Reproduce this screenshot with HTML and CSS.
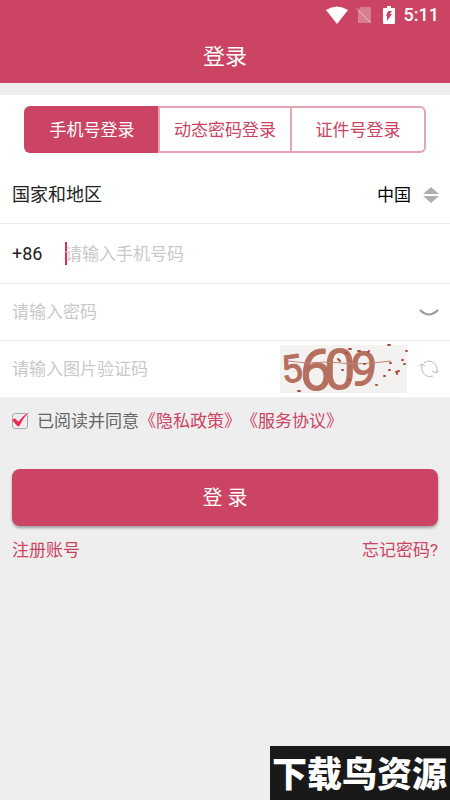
FILE: index.html
```html
<!DOCTYPE html>
<html lang="zh-CN">
<head>
<meta charset="utf-8">
<meta name="viewport" content="width=device-width, initial-scale=1">
<title>登录</title>
<link rel="stylesheet" href="styles.css">
</head>
<body>
<header class="top">
  <div class="status">
    <svg class="wifi" viewBox="0 0 22 18" aria-hidden="true"><path d="M0 4Q11-3 22 4L11 18Z"/></svg>
    <svg class="sim" viewBox="0 0 16 18" aria-hidden="true"><path class="sim-card" d="M5 1H14Q15 1 15 2V16Q15 17 14 17H3Q2 17 2 16V4Z"/><path class="sim-slash" d="M0 2L15 17"/></svg>
    <svg class="battery" viewBox="0 0 12 18" aria-hidden="true"><path d="M4 0H8V2H11Q12 2 12 3V17Q12 18 11 18H1Q0 18 0 17V3Q0 2 1 2H4Z"/><path class="bolt" d="M5 5H9L7 8H9L4 15V10H3Z"/></svg>
    <span>5:11</span>
  </div>
  <h1>登录</h1>
</header>
<main>
  <form>
    <section class="card">
      <div class="tabs">
        <button type="button" class="tab active">手机号登录</button>
        <button type="button" class="tab">动态密码登录</button>
        <button type="button" class="tab">证件号登录</button>
      </div>
      <div class="row region">
        <label for="country">国家和地区</label>
        <select id="country"><option>中国</option></select>
        <svg class="sorter" viewBox="0 0 16 16" aria-hidden="true"><path d="M8 0L16 7H0ZM0 9H16L8 16Z"/></svg>
      </div>
      <div class="row phone">
        <label class="code" for="phone">+86</label>
        <span class="caret"></span>
        <input id="phone" type="tel" placeholder="请输入手机号码">
      </div>
      <div class="row">
        <input type="password" aria-label="密码" placeholder="请输入密码">
        <button type="button" class="icon" aria-label="显示密码"><svg viewBox="0 0 20 20"><path class="eye" d="M1 8Q10 17 19 8"/></svg></button>
      </div>
      <div class="row">
        <input type="text" aria-label="图片验证码" placeholder="请输入图片验证码">
        <svg class="captcha" viewBox="0 0 127 48" role="img" aria-label="验证码">
          <rect width="127" height="48" fill="#f4f1f1"/>
          <g class="digits">
            <text x="1" y="37" font-size="38" transform="rotate(-8 12 24)">5</text>
            <text x="20" y="45" font-size="58" transform="rotate(4 36 24)">6</text>
            <text x="44" y="44" font-size="56">0</text>
            <text x="70" y="41" font-size="48" transform="rotate(6 84 24)">9</text>
          </g>
          <path class="scratch" d="M8 16L26 18L48 17L74 19L92 18L111 16"/>
          <path class="specks" d="M18 46h2M69 4h2M66 8h1M58 14l2 2M62 25h1M69 35h1M78 6h2M88 7l1-1M84 19h1M96 40h1M104 31h1M109 25h1M110 18h1M108 0h2M116 27l3-1M117 28v1M122 15h1M124 19h1M126 6h1"/>
        </svg>
        <button type="button" class="icon" aria-label="刷新验证码"><svg viewBox="0 0 20 20"><path class="refresh" d="M3 5V11A8 8 0 0 0 14 17M5 4A8 8 0 0 1 17 14M0 7L3 5L6 7M13 12L17 14L20 12"/></svg></button>
      </div>
    </section>
    <div class="agree">
      <span class="check">
        <input type="checkbox" id="agree" checked>
        <svg viewBox="0 0 20 18" aria-hidden="true"><path d="M0 9L3 7L7 11Q12 4 19 0Q12 7 8 16H6Z"/></svg>
      </span>
      <label for="agree">已阅读并同意</label><a href="#privacy">《隐私政策》</a><a href="#terms">《服务协议》</a>
    </div>
    <button type="submit" class="submit">登 录</button>
    <nav class="links"><a href="#register">注册账号</a><a href="#forgot">忘记密码?</a></nav>
  </form>
</main>
<footer class="brand">下载鸟资源</footer>
</body>
</html>
```
FILE: styles.css
```css
* { box-sizing: border-box; }
body {
  margin: 0;
  min-height: 100vh;
  display: flex;
  flex-direction: column;
  background: #eee;
  color: #222;
  font-family: Roboto, "Noto Sans CJK SC", sans-serif;
  font-size: 17px;
  line-height: 24px;
}
button, input, select { font: inherit; color: inherit; border: 0; padding: 0; margin: 0; background: none; border-radius: 0; }
a { color: #cb4463; text-decoration: none; }
svg { display: block; flex: none; }
.top { background: #cb4463; color: #fff; height: 83px; }
.status { display: flex; justify-content: flex-end; align-items: center; height: 30px; padding-right: 11px; font-size: 18px; font-weight: 500; }
.wifi { width: 22px; height: 18px; fill: #fff; margin-right: 8px; }
.sim { width: 16px; height: 18px; margin-right: 11px; }
.sim-card { fill: #fff; opacity: .3; }
.sim-slash { stroke: #fff; opacity: .5; fill: none; }
.battery { width: 12px; height: 18px; fill: #fff; margin-right: 9px; }
.bolt { fill: #cb4463; }
h1 { margin: 0; font-size: 22px; font-weight: 400; line-height: 54px; text-align: center; }
main { flex: 1; }
.card { margin-top: 12px; padding-top: 11px; background: #fff; }
.tabs { display: grid; grid-template-columns: repeat(3, 1fr); margin: 0 24px; height: 47px; }
.tab { color: #cb4463; white-space: nowrap; border: 2px solid #e6a3b3; }
.tab:first-child { border-radius: 6px 0 0 6px; }
.tab:last-child { border-radius: 0 6px 6px 0; border-left: 0; }
.tab.active { background: #cb4463; border-color: #cb4463; border-right: 0; color: #fff; }
.row { display: flex; align-items: center; height: 57px; padding: 0 11px 0 12px; border-top: 1px solid #e8e8e8; }
.row input { flex: 1; min-width: 0; height: 40px; outline: 0; }
.row input::placeholder { color: #c9c9c9; opacity: 1; }
.region { height: 70px; border: 0; padding-top: 13px; }
.region label { flex: 1; font-size: 18px; }
.region select { appearance: none; color: #000; outline: 0; }
.sorter { width: 16px; height: 16px; fill: #b0b0b0; margin-left: 12px; }
.phone { height: 60px; }
.code { width: 53px; font-size: 18px; }
.caret { width: 2px; height: 23px; margin-right: -2px; background: #d9304f; }
.icon { width: 20px; height: 20px; flex: none; }
.icon svg { width: 20px; height: 20px; fill: none; }
.eye { stroke: #999; stroke-width: 2; }
.refresh { stroke: #bbb; }
.captcha { width: 127px; height: 48px; margin-right: 12px; overflow: visible; }
.digits { fill: #b5705f; stroke: #b5705f; stroke-width: 1; font-family: Roboto, sans-serif; }
.scratch { fill: none; stroke: #c58473; }
.specks { fill: none; stroke: #a94f3c; stroke-width: 2; stroke-linecap: round; }
.agree { display: flex; align-items: center; height: 48px; padding-left: 12px; color: #666; white-space: nowrap; }
.check { position: relative; width: 16px; height: 16px; margin-right: 9px; }
.check input { display: block; appearance: none; width: 16px; height: 16px; border: 1px solid #aaa; border-radius: 3px; }
.check svg { position: absolute; left: 0; top: -1px; width: 18px; height: 16px; fill: #f6264f; pointer-events: none; }
.submit { display: block; width: calc(100% - 24px); height: 57px; margin: 24px 12px 0; border-radius: 8px; background: #cb4463; color: #fff; font-size: 20px; box-shadow: 0 2px 3px #0005; }
.links { display: flex; justify-content: space-between; margin: 12px 12px 0; }
.brand { align-self: flex-end; height: 54px; padding: 0 3px 0 2px; background: #191919; color: #fff; font-family: "Noto Sans CJK SC", sans-serif; font-weight: 900; font-style: oblique 8deg; font-size: 35px; line-height: 52px; white-space: nowrap; }
```
